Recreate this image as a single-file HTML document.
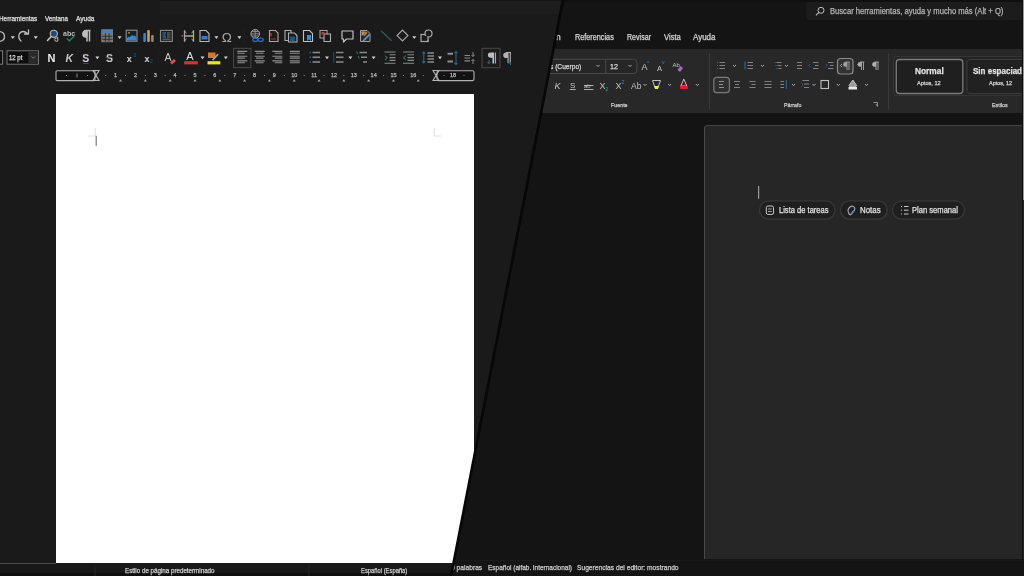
<!DOCTYPE html>
<html><head><meta charset="utf-8">
<style>
*{margin:0;padding:0;box-sizing:border-box}
html,body{width:1024px;height:576px;overflow:hidden;background:#1a1a1a;font-family:"Liberation Sans",sans-serif}
.a{position:absolute}
#lo{position:absolute;left:0;top:0;width:1024px;height:576px;background:#1a1a1a;overflow:hidden}
#wd{position:absolute;left:0;top:0;width:1024px;height:576px;background:#141414;clip-path:polygon(563px 0,1024px 0,1024px 576px,451px 576px);overflow:hidden}
svg{position:absolute;left:0;top:0;overflow:visible}
body>div,body>svg{filter:blur(0.4px)}
.t{position:absolute;white-space:nowrap;transform-origin:0 50%;-webkit-text-stroke:0.25px currentColor}
</style></head><body>
<div id="lo">
  <div class="a" style="left:160px;top:0;width:864px;height:14px;background:#1d1d1d;border-top:1px solid #141414"></div>
  
  <div class="a" style="left:55.5px;top:94px;width:418.5px;height:469px;background:#ffffff"></div>
  <div class="a" style="left:0;top:563.5px;width:1024px;height:12.5px;background:#181818;border-bottom:3px solid #0e0e0e"></div><div class="a" style="left:0;top:562.5px;width:55.5px;height:1px;background:#4a4a4a"></div>
  <svg width="1024" height="576">
    <!-- page marks -->
    <path d="M88 136H95.3V128M434.3 128V136H441.5" fill="none" stroke="#d8d8d8" stroke-width="0.8"/>
    <rect x="95.6" y="135.8" width="1.2" height="10" fill="#7a7a7a"/>
    <!-- status separators -->
    <path d="M95 564V576M309 564V576" stroke="#262626" stroke-width="1"/>

    <!-- ===== row 1 icons ===== -->
    <g fill="none" stroke="#bdbdbd" stroke-width="1.3" stroke-linecap="round" stroke-linejoin="round">
      <path d="M-3 31.5Q4.5 31 4.5 36.5Q4.5 41 -1 41.5"/>
      <path d="M21 41Q17.5 37.5 19.5 33.5Q22.5 29.5 27.5 33.5M28.5 30V34H24.5"/>
    </g>
    <g fill="#d0d0d0">
      <path d="M10.8 36.3h4l-2 2.6z"/><path d="M33.8 36.3h4l-2 2.6z"/>
      <path d="M117.6 36.3h4l-2 2.6z"/><path d="M214.4 36.3h4l-2 2.6z"/><path d="M237.4 36.3h4l-2 2.6z"/><path d="M412.3 36.3h4l-2 2.6z"/>
    </g>
    <!-- find -->
    <circle cx="53.8" cy="33.8" r="3.6" fill="#1f4c75" stroke="#b8b8b8" stroke-width="1.1"/>
    <path d="M51.2 36.6L47.5 40.5" stroke="#c8c8c8" stroke-width="1.5" stroke-linecap="round"/>
    <path d="M57.8 36.8v4.4M57.8 41.2h-1.6a1.5 1.6 0 0 1 0-3.2h1.6" fill="none" stroke="#b8b8b8" stroke-width="1"/>
    <!-- abc -->
    <text x="63" y="35.8" font-size="7.5" font-weight="700" fill="#bdbdbd" font-family="Liberation Sans" textLength="12.2" lengthAdjust="spacingAndGlyphs">abc</text>
    <path d="M67 38.3l2.3 2.6 5-4.8" fill="none" stroke="#2a7f55" stroke-width="1.4"/>
    <!-- pilcrow -->
    <path d="M89.5 30.5v11M87 30.5v11M90.5 30.5H86a3.2 3.2 0 0 0 0 6.4h1.5" fill="none" stroke="#bdbdbd" stroke-width="1.5"/>
    <path d="M85 30.5h2.5v6.4H86a3.2 3.2 0 0 1 0-6.4z" fill="#bdbdbd"/>
    <path d="M96.5 29v13M178 29v13M244.5 29v13M336.5 29v13" stroke="#1f1f1f" stroke-width="1"/>
    <!-- table -->
    <rect x="101.8" y="29.8" width="10.8" height="12" fill="#757575" stroke="#8a8a8a" stroke-width="0.8"/>
    <rect x="101.8" y="29.8" width="10.8" height="3.4" fill="#4a80bb"/>
    <path d="M102 36.3h10.5M102 39.3h10.5M105.4 33.4v8.4M109 33.4v8.4" stroke="#2a2a2a" stroke-width="0.9"/>
    <!-- image -->
    <rect x="126.2" y="30.2" width="10.8" height="11" fill="#1a2028" stroke="#8f8f8f" stroke-width="1.1"/>
    <path d="M126.8 40.6v-2.4q1.5-2.2 3.2-1.2q1.6-2.6 3.6-1.2q2-.6 2.8 1.4v3.4z" fill="#3a85d0"/>
    <circle cx="129" cy="32.8" r="0.9" fill="#c8a03a"/>
    <!-- chart -->
    <rect x="143.3" y="33" width="2.6" height="9" rx="1" fill="#3f7fc4"/>
    <rect x="147.2" y="30" width="2.6" height="12" rx="1" fill="#d0a050"/>
    <rect x="151.1" y="35" width="2.6" height="7" rx="1" fill="#8a8a8a"/>
    <!-- text box -->
    <rect x="160.5" y="30.4" width="11.8" height="11" fill="#1c1f22" stroke="#8a8a8a" stroke-width="1.1"/>
    <path d="M162.5 33h3.5M162.5 35h3M162.5 37h3.5" stroke="#3f7fc0" stroke-width="1"/>
    <path d="M167 33h3.5M167 35h3.5M167 37h3.5M162.5 39.2h8" stroke="#7a7a7a" stroke-width="0.9"/>
    <!-- page break -->
    <path d="M184.5 30.5v11M193.5 30.5v11M184.5 36h9" stroke="#a8a8a8" stroke-width="1.3"/>
    <path d="M184.5 30.5q.5 2 2 2.5M184.5 41.5q.5-2 2-2.5M193.5 30.5q-.5 2-2 2.5M193.5 41.5q-.5-2-2-2.5" fill="none" stroke="#a8a8a8" stroke-width="1"/>
    <circle cx="182.2" cy="35.8" r="0.9" fill="#c04a5a"/>
    <!-- field -->
    <path d="M200 30.5h6l3 3v8h-9z" fill="none" stroke="#b8b8b8" stroke-width="1.1"/>
    <rect x="201.5" y="36" width="6" height="3.5" fill="#3a7bc0"/>
    <!-- omega -->
    <text x="221.8" y="41.5" font-size="13.5" fill="#a8a8a8" font-family="Liberation Sans">Ω</text>
    <!-- globe -->
    <circle cx="255.2" cy="33.8" r="4.3" fill="#2a2a2a" stroke="#a8a8a8" stroke-width="1"/>
    <path d="M250.9 33.8h8.6M255.2 29.5v8.6M251.8 31.5h6.8M251.8 36h6.8" stroke="#a0a0a0" stroke-width="0.7"/>
    <ellipse cx="255.3" cy="39.8" rx="2.6" ry="1.7" fill="none" stroke="#2f6aa8" stroke-width="1.3"/>
    <ellipse cx="260.6" cy="39.8" rx="2.6" ry="1.7" fill="none" stroke="#2f6aa8" stroke-width="1.3"/>
    <!-- footnote -->
    <path d="M269.5 30.5h6l2.5 2.5v8.5h-8.5z" fill="none" stroke="#b9a0a6" stroke-width="1.1"/>
    <path d="M271 33v3" stroke="#c04040" stroke-width="1.3"/>
    <path d="M271 39h5" stroke="#8a3a3a" stroke-width="1"/>
    <!-- endnote -->
    <path d="M285 30.5h6v10h-6z" fill="none" stroke="#b0b0b0" stroke-width="1.1"/>
    <path d="M288.5 33h6l2.5 2.5v6.5h-8.5z" fill="#1a1a1a" stroke="#b0b0b0" stroke-width="1.1"/>
    <rect x="290" y="36.5" width="5" height="4.5" fill="#1f5585"/>
    <!-- bookmark -->
    <path d="M303.5 30.5h6l3 3v8h-9z" fill="none" stroke="#c0c0c0" stroke-width="1.1"/>
    <path d="M307 35h4v6l-2-1.5-2 1.5z" fill="#3f8ad0"/>
    <!-- crossref -->
    <path d="M320 30.5h7v7.5h-7z" fill="none" stroke="#b0a0a0" stroke-width="1.1"/>
    <path d="M324 34h6.5v7.5H324z" fill="#1a1a1a" stroke="#b0b0b0" stroke-width="1.1"/>
    <rect x="321.5" y="32" width="3" height="2.5" fill="#a04a4a"/>
    <!-- comment -->
    <path d="M342 31h11v8h-6.5l-3 3v-3H342z" fill="none" stroke="#c0c0c0" stroke-width="1.2" stroke-linejoin="round"/>
    <!-- track changes -->
    <path d="M360.5 30.5h6.5l3 3v8h-9.5z" fill="#2a2a2a" stroke="#a0a0a0" stroke-width="1"/>
    <path d="M361.5 31.5h4l-3 4h-1z" fill="#c8963a"/>
    <path d="M362.5 40.5l6.5-6.8 1.2 1.3-6.5 6.8z" fill="#5a92d0"/>
    <path d="M363 35l3-3.5 1.5 1.2-3 3.5z" fill="#b08840"/>
    <!-- line -->
    <path d="M381 30.8L391.6 40.8" stroke="#2c5a52" stroke-width="1.5"/>
    <!-- diamond -->
    <path d="M402.5 30.2l5.4 5.4-5.4 5.4-5.4-5.4z" fill="none" stroke="#a8a8a8" stroke-width="1.2"/>
    <!-- shapes -->
    <rect x="421" y="34.5" width="7" height="7" fill="none" stroke="#a8a8a8" stroke-width="1.2"/>
    <circle cx="428.5" cy="33.5" r="3.5" fill="#1a1a1a" stroke="#a8a8a8" stroke-width="1.2"/>
    <rect x="424.5" y="36" width="4" height="4" fill="#1a1a1a"/>
    <path d="M421 41.5h7V36" fill="none" stroke="#a8a8a8" stroke-width="1.2"/>

    <!-- ===== row 2 ===== -->
    <rect x="-3" y="50.8" width="5.6" height="13.4" fill="#101010" stroke="#7a7a7a" stroke-width="1"/>
    <rect x="7" y="50.8" width="31.5" height="13.4" fill="#0c0c0c" stroke="#757575" stroke-width="1"/>
    <rect x="28.3" y="51.3" width="9.7" height="12.4" fill="#2a2a2a"/>
    <path d="M31.5 56.5l1.8 1.8 1.8-1.8" fill="none" stroke="#8a8a8a" stroke-width="0.8"/>
    <text x="47.5" y="61.6" font-size="11" font-weight="700" fill="#ececec" font-family="Liberation Sans">N</text>
    <text x="65.5" y="61.6" font-size="10.5" font-weight="700" font-style="italic" fill="#c8c8c8" font-family="Liberation Sans">K</text>
    <text x="82.3" y="61.6" font-size="10.5" font-weight="700" fill="#c8c8c8" font-family="Liberation Sans">S</text>
    <path d="M83 63.5h5.5" stroke="#2a5a70" stroke-width="0.9"/>
    <path d="M95.3 56.6h4l-2 2.6z" fill="#d0d0d0"/>
    <text x="106" y="61.6" font-size="10.5" font-weight="700" fill="#c8c8c8" font-family="Liberation Sans">S</text>
    <path d="M105.5 57.5h7" stroke="#5a5a5a" stroke-width="0.6"/>
    <text x="126.8" y="61.6" font-size="9" font-weight="700" fill="#d8d8d8" font-family="Liberation Sans">x</text>
    <text x="133.5" y="57" font-size="5" fill="#2a5a80" font-family="Liberation Sans">2</text>
    <text x="144.4" y="61.6" font-size="9" font-weight="700" fill="#d8d8d8" font-family="Liberation Sans">x</text>
    <text x="150" y="63" font-size="5" fill="#2a5a80" font-family="Liberation Sans">2</text>
    <path d="M158.7 50v15M229 50v15M304.8 50v15M378.4 50v15M419.4 50v15" stroke="#202020" stroke-width="1"/>
    <!-- clear formatting -->
    <text x="164.5" y="61" font-size="10.5" fill="#c8c8c8" font-family="Liberation Sans">A</text>
    <path d="M170 62.5l4-3.5 2 2-4 3.5z" fill="#e04a5a"/>
    <!-- font color -->
    <text x="186.2" y="60" font-size="11" fill="#e0e0e0" font-family="Liberation Sans">A</text>
    <rect x="184.2" y="61.2" width="13.6" height="3.2" fill="#d0333a"/>
    <path d="M200.5 56.6h4l-2 2.6z" fill="#d0d0d0"/>
    <!-- highlight -->
    <path d="M208 52.5h7.5v5.5h-7.5z" fill="#d07a2a"/>
    <path d="M212 59.5l5.5-6 1.2 1.2-5.5 6z" fill="#a0a0a0"/>
    <rect x="207.5" y="61.2" width="12.8" height="3.2" fill="#f0e028"/>
    <path d="M223.8 56.6h4l-2 2.6z" fill="#d0d0d0"/>
    <!-- align left selected -->
    <rect x="233.6" y="48.3" width="17.3" height="19.4" fill="#1c1c1c" stroke="#4a4a4a" stroke-width="1"/>
    <path d="M237.3 51.4h10M237.3 53.2h7.5M237.3 56.3h10M237.3 58.1h7.5M237.3 60.9h10M237.3 62.7h7.5" stroke="#8e8e8e" stroke-width="1.1"/>
    <path d="M254.8 51.4h10M256.05 53.2h7.5M254.8 56.3h10M256.05 58.1h7.5M254.8 60.9h10M256.05 62.7h7.5" stroke="#8e8e8e" stroke-width="1.1"/>
    <path d="M272.3 51.4h10M274.8 53.2h7.5M272.3 56.3h10M274.8 58.1h7.5M272.3 60.9h10M274.8 62.7h7.5" stroke="#8e8e8e" stroke-width="1.1"/>
    <path d="M289.8 51.4h10M289.8 53.2h10M289.8 56.3h10M289.8 58.1h10M289.8 60.9h10M289.8 62.7h10" stroke="#8e8e8e" stroke-width="1.1"/>
    <!-- bullets -->
    <path d="M312.5 52.5h7.5M312.5 57.3h7.5M312.5 62h7.5" stroke="#8e8e8e" stroke-width="1.6"/>
    <path d="M309.5 52.5h1.5M309.5 57.3h1.5M309.5 62h1.5" stroke="#2f5f90" stroke-width="1.4"/>
    <path d="M325 56.6h4l-2 2.6z" fill="#d0d0d0"/>
    <!-- numbered -->
    <path d="M336 52.5h7.5M336 57.3h7.5M336 62h7.5" stroke="#8a8a8a" stroke-width="1.6"/>
    <path d="M333.8 52v11" stroke="#2a4560" stroke-width="1.2"/>
    <path d="M348.4 56.6h4l-2 2.6z" fill="#d0d0d0"/>
    <!-- outline -->
    <path d="M359.5 52.5h7.5M361 57.3h6M363 62h4" stroke="#8a8a8a" stroke-width="1.6"/>
    <path d="M356.5 51.5l1.2 2.5M358.2 56l1.2 2.5" stroke="#2a6a60" stroke-width="1.1"/>
    <path d="M371.6 56.6h4l-2 2.6z" fill="#d0d0d0"/>
    <!-- indent -->
    <path d="M384.5 52h11M389.5 54.8h6M389.5 57.6h6M389.5 60.4h6M384.5 63.2h11" stroke="#8a8a8a" stroke-width="1.1"/>
    <path d="M385 55.6l2.2 2.2-2.2 2.2" fill="none" stroke="#256a5a" stroke-width="1.2"/>
    <!-- outdent -->
    <path d="M403 52h11M407.5 54.8h6.5M407.5 57.6h6.5M407.5 60.4h6.5M403 63.2h11" stroke="#8a8a8a" stroke-width="1.1"/>
    <path d="M405.8 55.6l-2.2 2.2 2.2 2.2" fill="none" stroke="#256a5a" stroke-width="1.2"/>
    <!-- line spacing -->
    <path d="M427.5 53h6.5M427.5 56h6.5M427.5 59h6.5M427.5 62h6.5" stroke="#8a8a8a" stroke-width="1.3"/>
    <path d="M423.8 52v11M422.3 53.5l1.5-1.5 1.5 1.5M422.3 61.5l1.5 1.5 1.5-1.5" fill="none" stroke="#2c6488" stroke-width="1.1"/>
    <path d="M438 56.6h4l-2 2.6z" fill="#d0d0d0"/>
    <!-- para spacing -->
    <path d="M447.5 53.7h5.5M447.5 61.5h5.5" stroke="#8e8e8e" stroke-width="2"/>
    <path d="M456 51.5v13M454.5 53l1.5-1.5 1.5 1.5M454.5 63l1.5 1.5 1.5-1.5" fill="none" stroke="#2c6488" stroke-width="1.1"/>
    <!-- spacing 2 -->
    <path d="M464.5 55.5h5.5M464.5 58h5.5M464.5 60.8h5.5" stroke="#8a8a8a" stroke-width="1.2"/>
    <path d="M473 52v4.5M471.5 55l1.5 1.5 1.5-1.5M473 64v-4.5M471.5 61l1.5-1.5 1.5 1.5" fill="none" stroke="#8a8a8a" stroke-width="1"/>
    <!-- pilcrow selected -->
    <rect x="482" y="48.3" width="18" height="19.4" fill="#1d1d1d" stroke="#4a4a4a" stroke-width="1"/>
    <path d="M490.5 52.5h3.5v11h-1.6v-5.8h-1.9a2.6 2.6 0 0 1 0-5.2z" fill="#bdbdbd"/>
    <path d="M495.4 52.5v11" stroke="#a8a8a8" stroke-width="1.3"/>
    <path d="M489 60v3.5M487.5 62l1.5 1.5 1.5-1.5" fill="none" stroke="#2c7088" stroke-width="1"/>
    <!-- pilcrow rtl -->
    <path d="M508.5 52.5h-2.5a2.8 2.8 0 0 0 0 5.6h1.5v5h1.3z" fill="#b0b0b0"/>
    <path d="M510.3 52.5v10.5M506 52.5h5" stroke="#b0b0b0" stroke-width="1.1"/>
    <path d="M509 60.5v3.5M510.5 62v3" stroke="#2c7088" stroke-width="1"/>

    <!-- ===== ruler ===== -->
    <rect x="56" y="70.8" width="39" height="9.8" rx="1" fill="#121212" stroke="#b0b0b0" stroke-width="1.1"/>
    <path d="M93 70.5h6l-6 10h6z" fill="none" stroke="#b5b5b5" stroke-width="1.1"/>
    <rect x="437" y="70.8" width="37" height="9.8" rx="1.5" fill="#121212" stroke="#b0b0b0" stroke-width="1.1"/>
    <path d="M433 70.5h6l-6 10h6z" fill="none" stroke="#b5b5b5" stroke-width="1.1"/>
    <g fill="#8a8a8a"><rect x="105.17" y="75" width="1" height="1" /><rect x="125.02" y="75" width="1" height="1" /><rect x="144.88" y="75" width="1" height="1" /><rect x="164.73" y="75" width="1" height="1" /><rect x="184.58" y="75" width="1" height="1" /><rect x="204.43" y="75" width="1" height="1" /><rect x="224.28" y="75" width="1" height="1" /><rect x="244.12" y="75" width="1" height="1" /><rect x="263.98" y="75" width="1" height="1" /><rect x="283.82" y="75" width="1" height="1" /><rect x="303.68" y="75" width="1" height="1" /><rect x="323.53" y="75" width="1" height="1" /><rect x="343.38" y="75" width="1" height="1" /><rect x="363.23" y="75" width="1" height="1" /><rect x="383.07" y="75" width="1" height="1" /><rect x="402.93" y="75" width="1" height="1" /><rect x="422.78" y="75" width="1" height="1" /></g><path d="M118.96 81.6h3.2l-1.6-2.4zM143.77 81.6h3.2l-1.6-2.4zM168.58 81.6h3.2l-1.6-2.4zM193.39 81.6h3.2l-1.6-2.4zM218.20 81.6h3.2l-1.6-2.4zM243.01 81.6h3.2l-1.6-2.4zM267.82 81.6h3.2l-1.6-2.4zM292.63 81.6h3.2l-1.6-2.4zM317.44 81.6h3.2l-1.6-2.4zM342.25 81.6h3.2l-1.6-2.4zM367.06 81.6h3.2l-1.6-2.4zM391.87 81.6h3.2l-1.6-2.4zM416.68 81.6h3.2l-1.6-2.4z" fill="#a0a0a0"/><rect x="443.5" y="75" width="1" height="1" fill="#8a8a8a"/><rect x="463.5" y="75" width="1" height="1" fill="#8a8a8a"/><path d="M77 73.5v4" stroke="#8a8a8a" stroke-width="1"/><rect x="66" y="75" width="1" height="1" fill="#8a8a8a"/><rect x="87" y="75" width="1" height="1" fill="#8a8a8a"/>
  </svg>
<div class="t" style="left:-1.50px;top:15.36px;font-size:8px;line-height:1;color:#e2e2e2;font-weight:400;transform:scaleX(0.798)">Herramientas</div>
<div class="t" style="left:45.00px;top:15.36px;font-size:8px;line-height:1;color:#e2e2e2;font-weight:400;transform:scaleX(0.780)">Ventana</div>
<div class="t" style="left:76.20px;top:15.36px;font-size:8px;line-height:1;color:#e2e2e2;font-weight:400;transform:scaleX(0.816)">Ayuda</div>
<div class="t" style="left:9.40px;top:53.66px;font-size:8px;line-height:1;color:#e0e0e0;font-weight:400;transform:scaleX(0.753)">12 pt</div>
<div class="t" style="left:125.00px;top:566.74px;font-size:7px;line-height:1;color:#d0d0d0;font-weight:400;transform:scaleX(0.888)">Estilo de página predeterminado</div>
<div class="t" style="left:361.00px;top:566.74px;font-size:7px;line-height:1;color:#d0d0d0;font-weight:400;transform:scaleX(0.832)">Español (España)</div>
<div class="t" style="left:114.07px;top:72.81px;font-size:5.5px;line-height:1;color:#b8b8b8;font-weight:400;transform:scaleX(1.000)">1</div>
<div class="t" style="left:133.92px;top:72.81px;font-size:5.5px;line-height:1;color:#b8b8b8;font-weight:400;transform:scaleX(1.000)">2</div>
<div class="t" style="left:153.77px;top:72.81px;font-size:5.5px;line-height:1;color:#b8b8b8;font-weight:400;transform:scaleX(1.000)">3</div>
<div class="t" style="left:173.62px;top:72.81px;font-size:5.5px;line-height:1;color:#b8b8b8;font-weight:400;transform:scaleX(1.000)">4</div>
<div class="t" style="left:193.47px;top:72.81px;font-size:5.5px;line-height:1;color:#b8b8b8;font-weight:400;transform:scaleX(1.000)">5</div>
<div class="t" style="left:213.32px;top:72.81px;font-size:5.5px;line-height:1;color:#b8b8b8;font-weight:400;transform:scaleX(1.000)">6</div>
<div class="t" style="left:233.17px;top:72.81px;font-size:5.5px;line-height:1;color:#b8b8b8;font-weight:400;transform:scaleX(1.000)">7</div>
<div class="t" style="left:253.02px;top:72.81px;font-size:5.5px;line-height:1;color:#b8b8b8;font-weight:400;transform:scaleX(1.000)">8</div>
<div class="t" style="left:272.87px;top:72.81px;font-size:5.5px;line-height:1;color:#b8b8b8;font-weight:400;transform:scaleX(1.000)">9</div>
<div class="t" style="left:291.19px;top:72.81px;font-size:5.5px;line-height:1;color:#b8b8b8;font-weight:400;transform:scaleX(1.000)">10</div>
<div class="t" style="left:311.24px;top:72.81px;font-size:5.5px;line-height:1;color:#b8b8b8;font-weight:400;transform:scaleX(1.000)">11</div>
<div class="t" style="left:330.89px;top:72.81px;font-size:5.5px;line-height:1;color:#b8b8b8;font-weight:400;transform:scaleX(1.000)">12</div>
<div class="t" style="left:350.74px;top:72.81px;font-size:5.5px;line-height:1;color:#b8b8b8;font-weight:400;transform:scaleX(1.000)">13</div>
<div class="t" style="left:370.59px;top:72.81px;font-size:5.5px;line-height:1;color:#b8b8b8;font-weight:400;transform:scaleX(1.000)">14</div>
<div class="t" style="left:390.44px;top:72.81px;font-size:5.5px;line-height:1;color:#b8b8b8;font-weight:400;transform:scaleX(1.000)">15</div>
<div class="t" style="left:410.29px;top:72.81px;font-size:5.5px;line-height:1;color:#b8b8b8;font-weight:400;transform:scaleX(1.000)">16</div>
<div class="t" style="left:449.99px;top:72.81px;font-size:5.5px;line-height:1;color:#b8b8b8;font-weight:400;transform:scaleX(1.000)">18</div>
</div>
<div id="wd">
  <!-- search bar -->
  <div class="a" style="left:805.5px;top:2px;width:217px;height:18px;background:#1c1c1c;border-radius:3px"></div>
  <!-- ribbon -->
  <div class="a" style="left:430px;top:0;width:600px;height:2px;background:#0f0f0f"></div><div class="a" style="left:430px;top:49px;width:600px;height:64px;background:#282828;border-radius:6px"></div>
  <!-- doc page -->
  <div class="a" style="left:704.3px;top:124.8px;width:330px;height:434.7px;background:#262626;border-top:1.5px solid #434343;border-left:1.5px solid #4a4a4a;border-radius:3.5px 0 0 0"></div>
  
  <!-- status -->
  <div class="a" style="left:0;top:559.5px;width:1024px;height:16.5px;background:#141414;border-top:1px solid #191919"></div>
  <svg width="1024" height="576">
    <!-- search icon -->
    <circle cx="821" cy="10.3" r="3" fill="none" stroke="#bdbdbd" stroke-width="1"/>
    <path d="M818.8 12.5l-2.8 2.8" stroke="#bdbdbd" stroke-width="1.1"/>
    <!-- separators -->
    <path d="M709.5 53v56M888.5 53v56" stroke="#3a3a3a" stroke-width="1"/>
    <!-- font combo -->
    <path d="M520 59.3h113.5a3.5 3.5 0 0 1 3.5 3.5v7.2a3.5 3.5 0 0 1-3.5 3.5H520" fill="#262626" stroke="#484848" stroke-width="1"/>
    <path d="M605.8 59.3v14.2" stroke="#484848" stroke-width="1"/>
    <path d="M596.5 65l1.5 1.5 1.5-1.5M628.5 65l1.5 1.5 1.5-1.5" fill="none" stroke="#bdbdbd" stroke-width="0.9"/>
    <!-- grow/shrink -->
    <text x="641.5" y="70" font-size="9" fill="#c8c8c8" font-family="Liberation Sans">A</text>
    <text x="647" y="64.5" font-size="5" fill="#3a8ad0" font-family="Liberation Sans">^</text>
    <text x="657" y="70.5" font-size="7.5" fill="#c8c8c8" font-family="Liberation Sans">A</text>
    <text x="662" y="64" font-size="5" fill="#3a8ad0" font-family="Liberation Sans">v</text>
    <text x="672.5" y="67" font-size="6" fill="#c8c8c8" font-family="Liberation Sans">Ab</text>
    <path d="M677.5 70l3-4 2.5 2-3 4z" fill="#b060d0"/>
    <!-- row2 font -->
    <text x="554.5" y="88.5" font-size="9" font-style="italic" fill="#c0c0c0" font-family="Liberation Sans">K</text>
    <text x="570" y="87.5" font-size="8" fill="#c0c0c0" font-family="Liberation Sans">S</text>
    <path d="M569.8 89.5h6" stroke="#c0c0c0" stroke-width="0.9"/>
    <text x="584" y="87.5" font-size="6" fill="#c0c0c0" font-family="Liberation Sans">ab</text>
    <path d="M584 85.5h9.5M584 89.5h9.5" stroke="#c0c0c0" stroke-width="0.9"/>
    <text x="599.5" y="89" font-size="9" fill="#c0c0c0" font-family="Liberation Sans">X</text>
    <text x="605.5" y="91" font-size="5" fill="#3aa070" font-family="Liberation Sans">2</text>
    <text x="615.5" y="89" font-size="9" fill="#c0c0c0" font-family="Liberation Sans">X</text>
    <text x="621.5" y="84" font-size="5" fill="#3a8ad0" font-family="Liberation Sans">2</text>
    <text x="631" y="89" font-size="8.5" fill="#c0c0c0" font-family="Liberation Sans">Ab</text>
    <path d="M643.5 84l1.5 1.5 1.5-1.5M668.2 84l1.5 1.5 1.5-1.5M695.8 84l1.5 1.5 1.5-1.5" fill="none" stroke="#bdbdbd" stroke-width="0.9"/>
    <path d="M652.5 80.5l2.5 7h3l2.5-7z" fill="none" stroke="#c0c0c0" stroke-width="1"/>
    <path d="M654 86h5l-1 3h-3z" fill="#e8f050"/>
    <path d="M683.8 79l-3 7h6z" fill="none" stroke="#c0c0c0" stroke-width="1"/>
    <rect x="680" y="86" width="7.8" height="3" fill="#e02020"/>
    <!-- paragraph row1 -->
    <g stroke="#8c8c8c" stroke-width="0.9">
      <path d="M719.5 62.5h5.5M719.5 65.5h5.5M719.5 68.5h5.5"/>
      <path d="M747.5 62.5h5.5M747.5 65.5h5.5M747.5 68.5h5.5"/>
      <path d="M776.5 62.5h5M777.5 65.5h4M778.5 68.5h3"/>
      <path d="M797 62.5h5M797 65.5h5M797 68.5h5"/>
      <path d="M813 62.5h5.5M815 65.5h3.5M813 68.5h5.5"/>
      <path d="M828 62.5h5.5M830 65.5h3.5M828 68.5h5.5"/>
      <path d="M719 81.5h6M719 84.5h4M719 87.5h6"/>
      <path d="M734 81.5h6M735 84.5h4M734 87.5h6"/>
      <path d="M749.5 81.5h6M751.5 84.5h4M749.5 87.5h6"/>
      <path d="M764.5 81.5h7M764.5 84.5h7M764.5 87.5h7"/>
      <path d="M780.5 81.5h3.5M780.5 84.5h3.5M780.5 87.5h3.5"/>
      <path d="M802.5 80.5h6.5M804 84h5M804 87.5h5"/>
    </g>
    <g stroke="#3a7ab8" stroke-width="0.8">
      <path d="M717 62.5h1M717 65.5h1M717 68.5h1"/>
      <path d="M745 61.5v8"/>
      <path d="M774.5 62.5h1M775.5 65.5h1M776.5 68.5h1"/>
      <path d="M810.5 64l-1.5 1.5 1.5 1.5M825.5 64l1.5 1.5-1.5 1.5"/>
      <path d="M786.3 80v9"/>
      <path d="M801.5 82.5l1 2-1 2"/>
    </g>
    <path d="M733 65l1.5 1.5 1.5-1.5M761 65l1.5 1.5 1.5-1.5M785 65l1.5 1.5 1.5-1.5M792 84l1.5 1.5 1.5-1.5M812.5 84l1.5 1.5 1.5-1.5M836.8 84l1.5 1.5 1.5-1.5M865 84l1.5 1.5 1.5-1.5" fill="none" stroke="#bdbdbd" stroke-width="0.9"/>
    <!-- selected pilcrow -->
    <rect x="837.5" y="58.5" width="15.5" height="15.5" rx="3" fill="#333333" stroke="#8a8a8a" stroke-width="1.2"/>
    <path d="M847 62h-1.5a2.4 2.4 0 0 0 0 4.8h1.5z" fill="#a0a0a0"/><path d="M847 62v8M849 62v8M845.5 62h4" stroke="#a0a0a0" stroke-width="0.9"/>
    <path d="M842 64l-1.5 1.5 1.5 1.5" fill="none" stroke="#b0b0b0" stroke-width="0.8"/>
    <path d="M861.5 62h-1.5a2.4 2.4 0 0 0 0 4.8h1.5z" fill="#a8a8a8"/><path d="M861.5 62v8M863.5 62v8M860 62h4.3" stroke="#a8a8a8" stroke-width="0.9"/>
    <path d="M857.5 64.5h1" stroke="#c0c0c0" stroke-width="1"/>
    <path d="M876 62h-1.5a2.4 2.4 0 0 0 0 4.8h1.5z" fill="#b0b0b0"/><path d="M876 62v8M878 62v8M874.5 62h4.3" stroke="#b0b0b0" stroke-width="0.9"/>
    <!-- align left selected -->
    <rect x="713.8" y="77.3" width="15.6" height="15.4" rx="3" fill="#2f2f2f" stroke="#7a7a7a" stroke-width="1.2"/><path d="M719 81.5h5M719 84.5h4M719 87.5h5" stroke="#9a9a9a" stroke-width="0.9"/>
    <!-- border square -->
    <rect x="821" y="80.5" width="7.5" height="8" fill="none" stroke="#c0c0c0" stroke-width="1.1"/>
    <!-- shading -->
    <path d="M849 85.5l3.8-5.5 3.8 5.5-1.2 1.5h-5.2z" fill="#9a9a9a" stroke="#d0d0d0" stroke-width="0.9"/>
    <rect x="848.5" y="87" width="8.5" height="2.5" fill="#e8e8e8"/>
    <!-- dialog launcher -->
    <path d="M873.5 102.5h4v4M876 104l1.5 2.5" fill="none" stroke="#9a9a9a" stroke-width="0.9"/>
    <!-- styles gallery -->
    <rect x="893.5" y="56.5" width="140" height="39" rx="3" fill="#242424" stroke="#353535" stroke-width="1"/>
    <rect x="896.3" y="59.5" width="66.5" height="34" rx="3" fill="#1f1f1f" stroke="#7a7a7a" stroke-width="1.3"/>
    <rect x="967" y="59.5" width="70" height="34" rx="3" fill="#212121" stroke="#3c3c3c" stroke-width="1"/>
    <!-- cursor -->
    <rect x="758" y="186" width="1.2" height="12.8" fill="#9a9a9a"/>
    <!-- chips -->
    <rect x="759.5" y="201" width="75.5" height="18.2" rx="9.1" fill="#1f1f1f" stroke="#3a3a3a" stroke-width="1.2"/>
    <rect x="840.5" y="201" width="46.8" height="18.2" rx="9.1" fill="#1f1f1f" stroke="#3a3a3a" stroke-width="1.2"/>
    <rect x="892.5" y="201" width="72" height="18.2" rx="9.1" fill="#1f1f1f" stroke="#3a3a3a" stroke-width="1.2"/>
    <rect x="766.3" y="206" width="7.2" height="8.4" rx="1.5" fill="none" stroke="#c8c8c8" stroke-width="1"/>
    <path d="M768 209h3.8M768 211.5h3.8" stroke="#c8c8c8" stroke-width="0.8"/>
    <path d="M848.5 212.5q-1.5-3 1.5-5.5q2.5-2 4.5.5q1 1.5-.5 3.5l-3 3.5q-1.5 1-2.5-2z" fill="none" stroke="#a8a8a8" stroke-width="1.1"/>
    <path d="M851 214l3.6-4.3" stroke="#4a86c8" stroke-width="1.6"/>
    <path d="M901 206.5h1M901 210.2h1M901 214h1M904 206.5h4.5M904 210.2h4.5M904 214h4.5" stroke="#c8c8c8" stroke-width="1"/>
  </svg>
<div class="t" style="left:830.40px;top:6.79px;font-size:8.3px;line-height:1;color:#b4b4b4;font-weight:400;transform:scaleX(0.918)">Buscar herramientas, ayuda y mucho más (Alt + Q)</div>
<div class="t" style="left:556.30px;top:32.57px;font-size:8.5px;line-height:1;color:#d8d8d8;font-weight:400;transform:scaleX(0.993)">n</div>
<div class="t" style="left:575.10px;top:32.57px;font-size:8.5px;line-height:1;color:#d8d8d8;font-weight:400;transform:scaleX(0.855)">Referencias</div>
<div class="t" style="left:626.80px;top:32.57px;font-size:8.5px;line-height:1;color:#d8d8d8;font-weight:400;transform:scaleX(0.833)">Revisar</div>
<div class="t" style="left:663.70px;top:32.57px;font-size:8.5px;line-height:1;color:#d8d8d8;font-weight:400;transform:scaleX(0.896)">Vista</div>
<div class="t" style="left:693.00px;top:32.57px;font-size:8.5px;line-height:1;color:#d8d8d8;font-weight:400;transform:scaleX(0.935)">Ayuda</div>
<div class="t" style="left:611.40px;top:101.92px;font-size:6px;line-height:1;color:#cfcfcf;font-weight:400;transform:scaleX(0.888)">Fuente</div>
<div class="t" style="left:783.50px;top:101.92px;font-size:6px;line-height:1;color:#cfcfcf;font-weight:400;transform:scaleX(0.889)">Párrafo</div>
<div class="t" style="left:992.20px;top:101.92px;font-size:6px;line-height:1;color:#cfcfcf;font-weight:400;transform:scaleX(0.883)">Estilos</div>
<div class="t" style="left:914.90px;top:65.52px;font-size:9.8px;line-height:1;color:#e4e4e4;font-weight:600;transform:scaleX(0.850)">Normal</div>
<div class="t" style="left:917.30px;top:79.82px;font-size:6px;line-height:1;color:#d8d8d8;font-weight:400;transform:scaleX(0.931)">Aptos, 12</div>
<div class="t" style="left:973.00px;top:65.52px;font-size:9.8px;line-height:1;color:#e4e4e4;font-weight:600;transform:scaleX(0.818)">Sin espaciad</div>
<div class="t" style="left:988.80px;top:79.82px;font-size:6px;line-height:1;color:#d8d8d8;font-weight:400;transform:scaleX(0.911)">Aptos, 12</div>
<div class="t" style="left:778.50px;top:206.07px;font-size:8.5px;line-height:1;color:#e2e2e2;font-weight:400;transform:scaleX(0.888)">Lista de tareas</div>
<div class="t" style="left:859.80px;top:206.07px;font-size:8.5px;line-height:1;color:#e2e2e2;font-weight:400;transform:scaleX(0.927)">Notas</div>
<div class="t" style="left:912.00px;top:206.07px;font-size:8.5px;line-height:1;color:#e2e2e2;font-weight:400;transform:scaleX(0.893)">Plan semanal</div>
<div class="t" style="left:450.80px;top:563.65px;font-size:7.5px;line-height:1;color:#cfcfcf;font-weight:400;transform:scaleX(0.891)">0 palabras</div>
<div class="t" style="left:488.00px;top:563.65px;font-size:7.5px;line-height:1;color:#cfcfcf;font-weight:400;transform:scaleX(0.865)">Español (alfab. internacional)</div>
<div class="t" style="left:577.00px;top:563.65px;font-size:7.5px;line-height:1;color:#cfcfcf;font-weight:400;transform:scaleX(0.889)">Sugerencias del editor: mostrando</div>
<div class="t" style="left:549.50px;top:62.86px;font-size:8px;line-height:1;color:#dcdcdc;font-weight:400;transform:scaleX(0.828)">s (Cuerpo)</div>
<div class="t" style="left:609.50px;top:62.86px;font-size:8px;line-height:1;color:#dcdcdc;font-weight:400;transform:scaleX(0.898)">12</div>
<div class="a" style="left:1022px;top:0;width:1px;height:560px;background:#0e0e0e"></div><div class="a" style="left:1023px;top:0;width:1px;height:200px;background:#9a9a9a"></div>
</div>
<svg width="1024" height="576" style="position:absolute;left:0;top:0"><line x1="563" y1="0" x2="451" y2="576" stroke="#070707" stroke-width="2.6"/></svg>
</body></html>
